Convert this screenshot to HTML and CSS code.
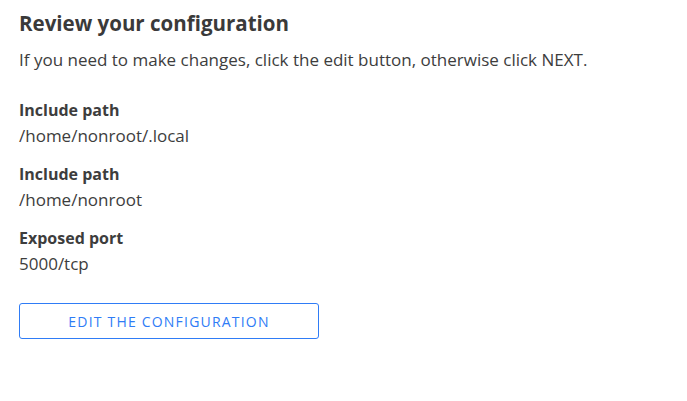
FILE: index.html
```html
<!DOCTYPE html>
<html>
<head>
<meta charset="utf-8">
<link rel="stylesheet" href="styles.css">
</head>
<body>
<main class="review">
  <h1 class="title">Review your configuration</h1>
  <p class="intro">If you need to make changes, click the edit button, otherwise click NEXT.</p>
  <dl class="items">
    <div class="item"><dt>Include path</dt><dd>/home/nonroot/.local</dd></div>
    <div class="item"><dt>Include path</dt><dd>/home/nonroot</dd></div>
    <div class="item"><dt>Exposed port</dt><dd>5000/tcp</dd></div>
  </dl>
  <button class="edit">EDIT THE CONFIGURATION</button>
</main>
</body>
</html>
```
FILE: styles.css
```css
html, body { margin: 0; padding: 0; background: #fff; }
body { font-family: "Open Sans", sans-serif; color: #3d3d3d; }
.review { padding: 9px 19px; display: flex; flex-direction: column; align-items: flex-start; }
.title { margin: 0; font-size: 20.5px; line-height: 28px; font-weight: 700; color: #3a3a3a; }
.intro { margin: 11px 0 0; font-size: 17px; line-height: 24px; }
.items { margin: 26px 0 0; display: flex; flex-direction: column; gap: 14px; }
.item { display: flex; flex-direction: column; gap: 2px; }
.items dt { font-size: 16px; font-weight: 700; line-height: 24px; }
.items dd { margin: 0; font-size: 17px; line-height: 24px; }
.edit { margin-top: 27px; width: 300px; height: 36px; padding: 0; background: #fff; border: 1px solid #2f7cf6; border-radius: 3px; color: #2f7cf6; font-family: "Open Sans", sans-serif; font-size: 14px; letter-spacing: 1.2px; cursor: pointer; }
```
